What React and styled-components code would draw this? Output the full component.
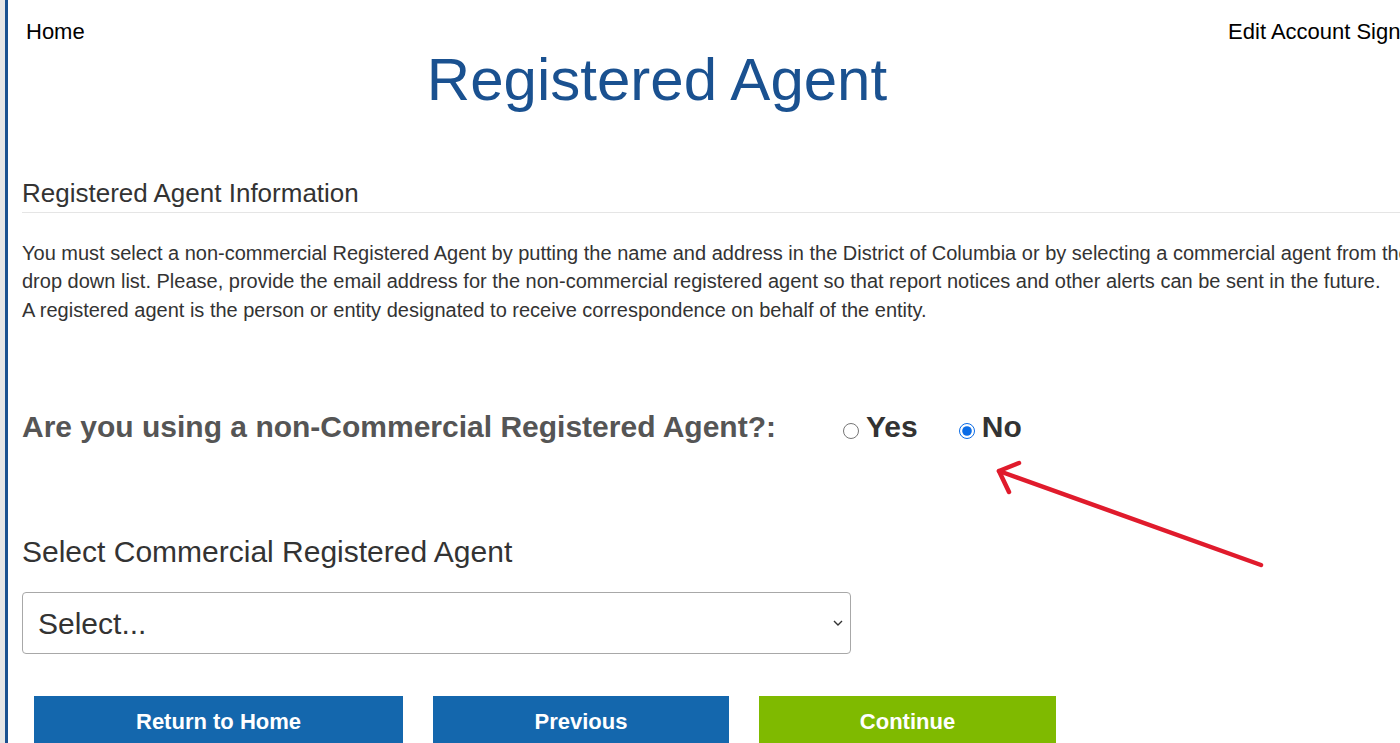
import React from 'react'
import styled, { createGlobalStyle } from 'styled-components';

const GlobalStyle = createGlobalStyle`
  html, body {
    margin: 0;
    padding: 0;
    overflow: hidden;
    background: #fff;
  }
  body {
    font-family: "Liberation Sans", Arial, sans-serif;
    color: #333;
  }
  * {
    box-sizing: border-box;
  }
`;

function App() {
  return (
    <>
      <GlobalStyle />
      <Shell>
        <Main>
          <Nav>
            <NavLink href="#">Home</NavLink>
            <NavRight>
              <NavLink href="#">Edit Account</NavLink>
              <NavLink href="#">Sign Out</NavLink>
            </NavRight>
          </Nav>

          <Title>Registered Agent</Title>

          <SectionHeader>Registered Agent Information</SectionHeader>
          <Intro>
            You must select a non-commercial Registered Agent by putting the name and address in the District of Columbia or by selecting a commercial agent from the
            <br />
            drop down list. Please, provide the email address for the non-commercial registered agent so that report notices and other alerts can be sent in the future.
            <br />
            A registered agent is the person or entity designated to receive correspondence on behalf of the entity.
          </Intro>

          <QuestionRow>
            <Question>Are you using a non-Commercial Registered Agent?:</Question>
            <RadioGroup>
              <Option>
                <Radio type="radio" name="noncommercial" value="yes" />
                <span>Yes</span>
              </Option>
              <Option>
                <Radio type="radio" name="noncommercial" value="no" defaultChecked />
                <span>No</span>
              </Option>
            </RadioGroup>
          </QuestionRow>

          <SelectLabel>Select Commercial Registered Agent</SelectLabel>
          <SelectWrap>
            <Select defaultValue="">
              <option value="">Select...</option>
            </Select>
            <Chevron width="10" height="6" viewBox="0 0 10 6">
              <path d="M1 1 L5 5 L9 1" fill="none" stroke="#333" strokeWidth="1.4" />
            </Chevron>
          </SelectWrap>

          <ButtonRow>
            <ActionButton $bg="#1467ad" $width={369}>Return to Home</ActionButton>
            <ActionButton $bg="#1467ad" $width={296}>Previous</ActionButton>
            <ActionButton $bg="#7fba00" $width={297}>Continue</ActionButton>
          </ButtonRow>

          <Arrow width="280" height="115" viewBox="0 0 280 115">
            <g fill="none" stroke="#e01b2c" strokeWidth="4.5" strokeLinecap="round" strokeLinejoin="round">
              <path d="M270 110 L8 16" />
              <path d="M28 8 L8 16 L18 37" />
            </g>
          </Arrow>
        </Main>
      </Shell>
    </>
  )
}

const Shell = styled.div`
  display: flex;
  border-left: 5px solid #e6e6e6;
  min-height: 100vh;
`;

const Main = styled.div`
  position: relative;
  width: 1450px;
  flex-shrink: 0;
  min-height: 100vh;
  border-left: 3px solid #1a5190;
  padding: 0 13px 0 14px;
`;

const Nav = styled.nav`
  display: flex;
  padding-top: 16px;
  font-size: 22px;
  line-height: 31px;
`;

const NavRight = styled.div`
  display: flex;
  gap: 6px;
  margin-left: auto;
`;

const NavLink = styled.a`
  color: #000;
  text-decoration: none;
  &:first-child {
    margin-left: 4px;
  }
  ${NavRight} &:first-child {
    margin-left: 0;
  }
`;

const Title = styled.h1`
  margin: 0;
  width: 1270px;
  text-align: center;
  font-size: 60px;
  line-height: 66px;
  font-weight: normal;
  color: #1a5190;
`;

const SectionHeader = styled.h2`
  margin: 66px 0 0;
  padding-bottom: 4px;
  border-bottom: 1px solid #e5e5e5;
  font-size: 26px;
  line-height: 28.6px;
  font-weight: normal;
  color: #333;
`;

const Intro = styled.p`
  margin: 26px 0 0;
  font-size: 20px;
  line-height: 28.57px;
  white-space: nowrap;
  color: #333;
`;

const QuestionRow = styled.div`
  display: flex;
  align-items: center;
  margin-top: 86px;
  height: 33px;
`;

const Question = styled.h3`
  margin: 0;
  font-size: 30px;
  line-height: 33px;
  font-weight: bold;
  color: #555;
`;

const RadioGroup = styled.div`
  display: flex;
  align-items: center;
  gap: 41px;
  margin-left: 67px;
`;

const Option = styled.label`
  display: flex;
  align-items: center;
  gap: 7px;
  font-size: 30px;
  line-height: 33px;
  font-weight: bold;
  color: #333;
`;

const Radio = styled.input`
  width: 16px;
  height: 16px;
  margin: 9px 0 0;
  accent-color: #0b6ce6;
`;

const SelectLabel = styled.h3`
  margin: 92px 0 0;
  font-size: 30px;
  line-height: 33px;
  font-weight: normal;
  color: #333;
`;

const SelectWrap = styled.div`
  position: relative;
  width: 829px;
  margin-top: 24px;
`;

const Select = styled.select`
  display: block;
  width: 100%;
  height: 62px;
  padding: 0 40px 0 15px;
  border: 1px solid #a8a8a8;
  border-radius: 4px;
  background: #fff;
  appearance: none;
  font-family: "Liberation Sans", Arial, sans-serif;
  font-size: 30px;
  color: #333;
`;

const Chevron = styled.svg`
  position: absolute;
  right: 8px;
  top: 28px;
  pointer-events: none;
`;

const ButtonRow = styled.div`
  display: flex;
  gap: 30px;
  margin-top: 42px;
  padding-left: 12px;
`;

const ActionButton = styled.button`
  width: ${p => p.$width}px;
  height: 52px;
  border: none;
  background: ${p => p.$bg};
  color: #fff;
  font-family: "Liberation Sans", Arial, sans-serif;
  font-size: 22px;
  font-weight: bold;
  cursor: pointer;
`;

const Arrow = styled.svg`
  position: absolute;
  left: 983px;
  top: 455px;
  pointer-events: none;
`;

export default App;
